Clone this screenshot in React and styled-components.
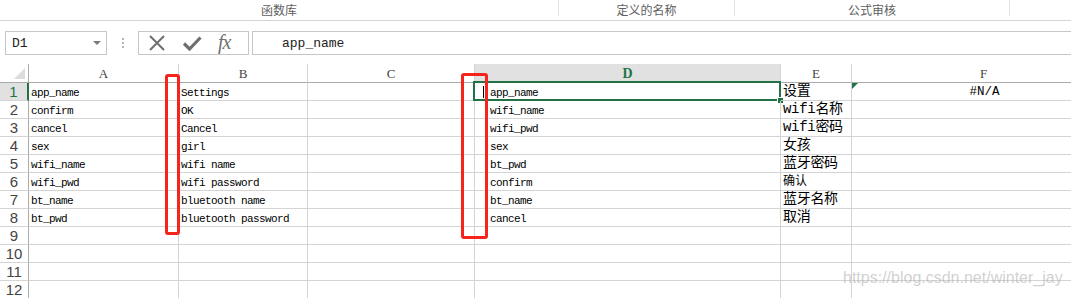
import React from "react";
import styled, { createGlobalStyle } from "styled-components";

const GREEN = "#217346";
const GRID = "#d4d4d4";
const MONO = `"Liberation Mono", "Noto Sans CJK SC", monospace`;

const GlobalStyle = createGlobalStyle`
  html, body {
    margin: 0;
    padding: 0;
    background: #ffffff;
    overflow: hidden;
  }
`;

const columns = [
  { key: "A", width: 150 },
  { key: "B", width: 129 },
  { key: "C", width: 167 },
  { key: "D", width: 306, selected: true, indent: 14 },
  { key: "E", width: 71, size: "big" },
  { key: "F", width: 264, size: "mid", center: true },
];

const rows = [
  { A: "app_name", B: "Settings", D: "app_name", E: "设置", F: "#N/A" },
  { A: "confirm", B: "OK", D: "wifi_name", E: "wifi名称" },
  { A: "cancel", B: "Cancel", D: "wifi_pwd", E: "wifi密码" },
  { A: "sex", B: "girl", D: "sex", E: "女孩" },
  { A: "wifi_name", B: "wifi name", D: "bt_pwd", E: "蓝牙密码" },
  { A: "wifi_pwd", B: "wifi password", D: "confirm", E: "确认", small: true },
  { A: "bt_name", B: "bluetooth name", D: "bt_name", E: "蓝牙名称" },
  { A: "bt_pwd", B: "bluetooth password", D: "cancel", E: "取消" },
  {},
  {},
  {},
  {},
];

const App = () => {
  return (
    <Page>
      <GlobalStyle />
      <Ribbon>
        <RibbonGroup $width={559}>函数库</RibbonGroup>
        <RibbonGroup $width={176}>定义的名称</RibbonGroup>
        <RibbonGroup $width={275}>公式审核</RibbonGroup>
        <RibbonGroup $last />
      </Ribbon>

      <FormulaBar>
        <NameBox>
          <span>D1</span>
          <DropArrow />
        </NameBox>
        <Grip>
          <i />
          <i />
          <i />
        </Grip>
        <ButtonsBox>
          <svg width="18" height="16" viewBox="0 0 18 16">
            <path d="M2 1 L16 15 M16 1 L2 15" stroke="#6f6f6f" strokeWidth="2" fill="none" />
          </svg>
          <svg width="20" height="16" viewBox="0 0 20 16">
            <path d="M2 8.5 L7.5 14 L18.5 2.5" stroke="#6f6f6f" strokeWidth="3.2" fill="none" />
          </svg>
          <Fx>fx</Fx>
        </ButtonsBox>
        <FormulaInput>app_name</FormulaInput>
      </FormulaBar>

      <Sheet>
        <Corner>
          <svg width="11" height="11" viewBox="0 0 11 11">
            <path d="M11 0 L11 11 L0 11 Z" fill="#dcdcdc" />
          </svg>
        </Corner>
        {columns.map((c) => (
          <ColHeader key={c.key} $selected={c.selected}>
            {c.key}
          </ColHeader>
        ))}

        {rows.map((r, i) => (
          <React.Fragment key={i}>
            <RowHeader $selected={i === 0}>{i + 1}</RowHeader>
            {columns.map((c) => (
              <Cell
                key={c.key}
                $indent={c.indent}
                $size={r.small && c.size === "big" ? "small" : c.size}
                $center={c.center}
              >
                {i === 0 && c.key === "D" && (
                  <>
                    <Selection>
                      <FillHandle />
                    </Selection>
                    <Caret />
                  </>
                )}
                {i === 0 && c.key === "F" && <ErrorMark />}
                {r[c.key]}
              </Cell>
            ))}
          </React.Fragment>
        ))}
      </Sheet>

      <RedMark style={{ left: 165, top: 74, width: 15, height: 161 }} />
      <RedMark style={{ left: 461, top: 73, width: 27, height: 166 }} />
      <Watermark>https://blog.csdn.net/winter_jay</Watermark>
    </Page>
  );
};
export default App;

const cellFont = {
  big: { size: "14px", spacing: "-0.3px", pad: "0px" },
  mid: { size: "12.5px", spacing: "0px", pad: "1px" },
  small: { size: "12px", spacing: "0px", pad: "1px" },
  normal: { size: "11px", spacing: "-0.6px", pad: "2px" },
};

const Page = styled.div`
  position: relative;
  width: 1071px;
  height: 298px;
  overflow: hidden;
  background: #ffffff;
`;

const Ribbon = styled.div`
  display: flex;
  height: 20px;
  border-bottom: 1px solid #d5d5d5;
`;

const RibbonGroup = styled.div`
  ${({ $width }) => ($width ? `width: ${$width}px;` : "flex: 1;")}
  flex-shrink: 0;
  box-sizing: border-box;
  height: 16px;
  display: flex;
  align-items: center;
  justify-content: center;
  border-right: ${({ $last }) => ($last ? "none" : "1px solid #e3e3e3")};
  font-family: "Noto Sans CJK SC", sans-serif;
  font-size: 12px;
  color: #5e5e5e;
  padding-top: 2px;
`;

const FormulaBar = styled.div`
  display: flex;
  align-items: stretch;
  height: 24px;
  margin-top: 10px;
`;

const NameBox = styled.div`
  box-sizing: border-box;
  width: 102px;
  margin-left: 5px;
  border: 1px solid #c6c6c6;
  display: flex;
  align-items: center;
  justify-content: space-between;
  padding: 0 5px 0 6px;
  font-family: ${MONO};
  font-size: 13px;
  color: #222;
`;

const DropArrow = styled.span`
  width: 0;
  height: 0;
  border-left: 4px solid transparent;
  border-right: 4px solid transparent;
  border-top: 4px solid #7a7a7a;
`;

const Grip = styled.div`
  width: 31px;
  display: flex;
  flex-direction: column;
  align-items: center;
  justify-content: center;
  gap: 2px;

  i {
    display: block;
    width: 2px;
    height: 2px;
    background: #b4b4b4;
  }
`;

const ButtonsBox = styled.div`
  box-sizing: border-box;
  width: 111px;
  border: 1px solid #c6c6c6;
  display: flex;
  align-items: center;
  gap: 16px;
  padding-left: 9px;
`;

const Fx = styled.span`
  font-family: "Liberation Serif", serif;
  font-style: italic;
  font-size: 20px;
  color: #707070;
  line-height: 1;
  letter-spacing: -1px;
  margin-top: -2px;
`;

const FormulaInput = styled.div`
  flex: 1;
  margin-left: 3px;
  border: 1px solid #c6c6c6;
  border-right: none;
  display: flex;
  align-items: center;
  padding-left: 29px;
  font-family: ${MONO};
  font-size: 13px;
  color: #222;
`;

const Sheet = styled.div`
  margin-top: 9px;
  display: grid;
  grid-template-columns: 29px 150px 129px 167px 306px 71px 264px;
  grid-template-rows: 19px repeat(12, 18px);
`;

const Corner = styled.div`
  box-sizing: border-box;
  border-right: 1px solid #ababab;
  border-bottom: 1px solid #ababab;
  display: flex;
  align-items: flex-end;
  justify-content: flex-end;
  padding: 0 3px 3px 0;
`;

const ColHeader = styled.div`
  box-sizing: border-box;
  border-right: 1px solid ${GRID};
  border-bottom: 1px solid ${({ $selected }) => ($selected ? GREEN : "#ababab")};
  background: ${({ $selected }) => ($selected ? "#e1e1e1" : "#ffffff")};
  display: flex;
  align-items: center;
  justify-content: center;
  font-family: "Liberation Serif", serif;
  font-size: ${({ $selected }) => ($selected ? "14px" : "13px")};
  font-weight: ${({ $selected }) => ($selected ? 700 : 400)};
  color: ${({ $selected }) => ($selected ? GREEN : "#444")};
  padding-top: 2px;
`;

const RowHeader = styled.div`
  box-sizing: border-box;
  border-right: ${({ $selected }) => ($selected ? `2px solid ${GREEN}` : "1px solid #ababab")};
  border-bottom: 1px solid ${GRID};
  background: ${({ $selected }) => ($selected ? "#e1e1e1" : "#ffffff")};
  display: flex;
  align-items: center;
  justify-content: center;
  font-family: "Liberation Sans", sans-serif;
  font-size: 15px;
  color: ${({ $selected }) => ($selected ? GREEN : "#444")};
`;

const Cell = styled.div`
  position: relative;
  box-sizing: border-box;
  border-right: 1px solid ${GRID};
  border-bottom: 1px solid ${GRID};
  padding-left: ${({ $indent }) => ($indent ? $indent + 1 : 2)}px;
  padding-top: ${({ $size }) => (cellFont[$size] || cellFont.normal).pad};
  font-family: ${MONO};
  font-size: ${({ $size }) => (cellFont[$size] || cellFont.normal).size};
  letter-spacing: ${({ $size }) => (cellFont[$size] || cellFont.normal).spacing};
  line-height: 17px;
  color: #000;
  white-space: nowrap;
  text-align: ${({ $center }) => ($center ? "center" : "left")};
`;

const Selection = styled.div`
  position: absolute;
  left: -2px;
  top: -2px;
  right: -1px;
  bottom: -1px;
  border: 2px solid ${GREEN};
  pointer-events: none;
`;

const FillHandle = styled.div`
  position: absolute;
  right: -5px;
  bottom: -5px;
  width: 5px;
  height: 5px;
  background: ${GREEN};
  border: 1px solid #ffffff;
`;

const Caret = styled.span`
  position: absolute;
  left: 8px;
  top: 3px;
  width: 1px;
  height: 12px;
  background: #000;
`;

const ErrorMark = styled.span`
  position: absolute;
  left: 0;
  top: 0;
  width: 0;
  height: 0;
  border-top: 6px solid ${GREEN};
  border-right: 6px solid transparent;
`;

const RedMark = styled.div`
  position: absolute;
  box-sizing: border-box;
  border: 3px solid #f5241c;
  border-radius: 3px;
  pointer-events: none;
`;

const Watermark = styled.div`
  position: absolute;
  left: 843px;
  top: 269px;
  font-family: "Liberation Sans", sans-serif;
  font-size: 16px;
  color: rgba(170, 170, 170, 0.55);
  white-space: nowrap;
`;
